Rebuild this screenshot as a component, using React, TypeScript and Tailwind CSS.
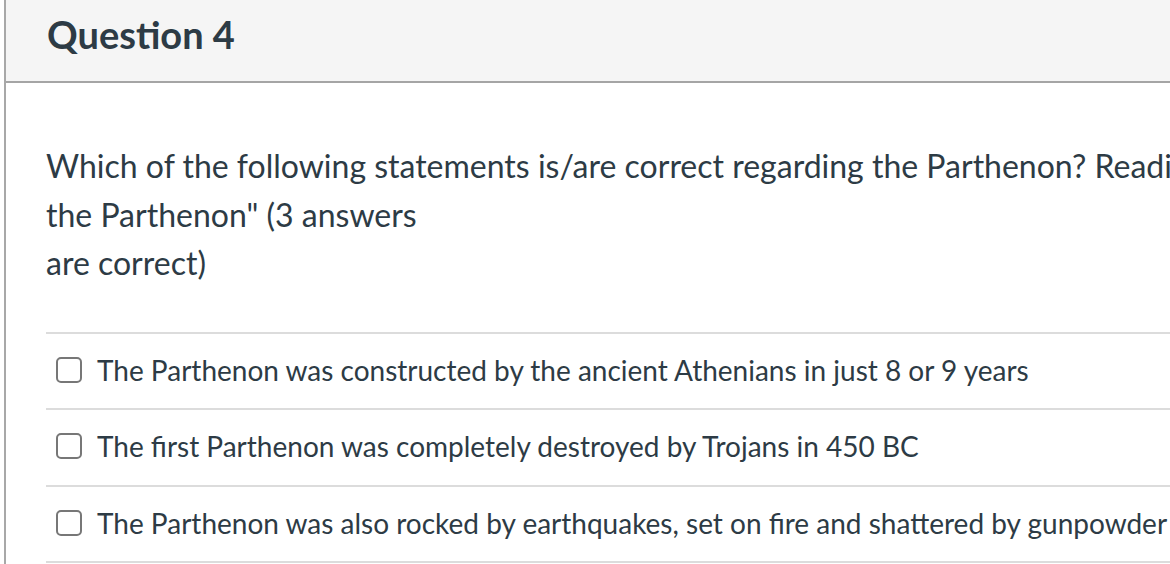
export default function App() {
  const answers = [
    "The Parthenon was constructed by the ancient Athenians in just 8 or 9 years",
    "The first Parthenon was completely destroyed by Trojans in 450 BC",
    "The Parthenon was also rocked by earthquakes, set on fire and shattered by gunpowder explosions",
  ];

  return (
    <div className="h-[564px] w-[1170px] overflow-hidden bg-white font-['Lato',sans-serif] text-[#2d3b45]">
      <div className="ml-1 w-[1600px] border-l-2 border-[#a8a8a8] h-full">
        <div className="flex h-[83px] items-center border-b-2 border-[#a5a5a5] bg-[#f5f5f5] pl-[41px] pb-[14px]">
          <h2 className="text-[38px] font-bold leading-none">Question 4</h2>
        </div>
        <div className="pl-[40px] pt-[59px]">
          <div className="text-[32px] leading-[48.5px] whitespace-nowrap">
            <p>
              Which of the following statements is/are correct regarding the Parthenon? Reading "The Story of
            </p>
            <p>
              the Parthenon" (3 answers
              <br />
              are correct)
            </p>
          </div>
          <div className="mt-[44px]">
            {answers.map((a) => (
              <div
                key={a}
                className="flex h-[76.5px] items-center border-t-2 border-[#dcdcdc] pl-[10px] pb-[2px]"
              >
                <span className="h-[26px] w-[26px] shrink-0 rounded-[5px] border-2 border-[#777777] bg-white" />
                <span className="ml-[15px] whitespace-nowrap text-[28px]">{a}</span>
              </div>
            ))}
            <div className="border-t-2 border-[#dcdcdc]" />
          </div>
        </div>
      </div>
    </div>
  );
}
